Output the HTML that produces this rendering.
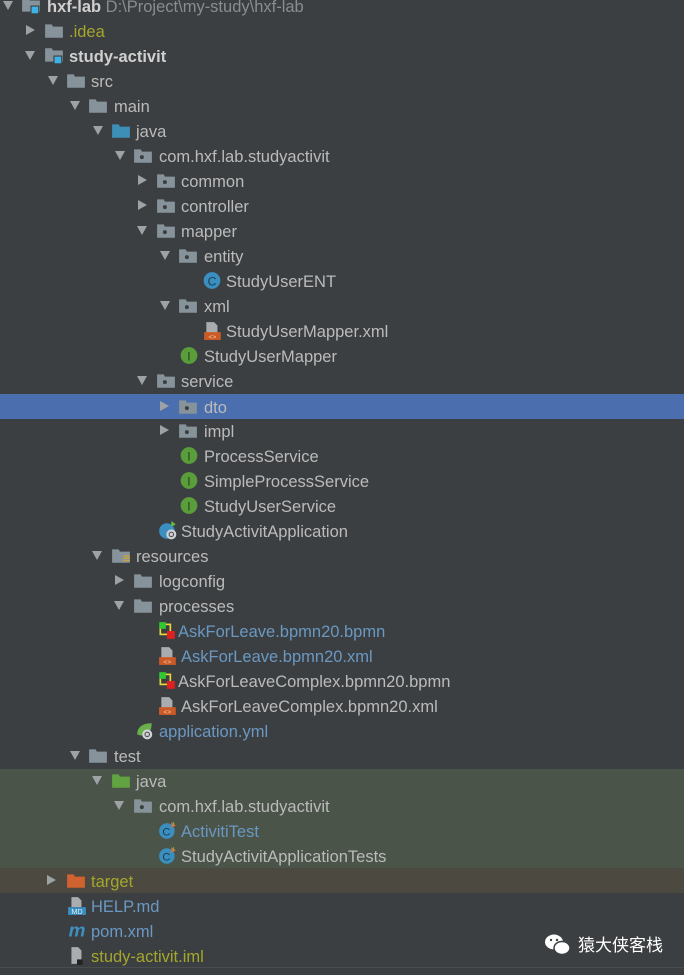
<!DOCTYPE html>
<html><head><meta charset="utf-8"><style>
body{margin:0;width:684px;height:975px;background:#3c3f41;overflow:hidden;position:relative;font-family:"Liberation Sans","Noto Sans CJK SC",sans-serif;font-size:16.5px;color:#bbbbbb}
.r{position:absolute;left:0;width:684px;height:25px}
.r>*{position:absolute}
.a{top:8px;width:0;height:0}
.o{border-left:5px solid transparent;border-right:5px solid transparent;border-top:9px solid #9fa2a5}
.c{top:7px;border-top:5px solid transparent;border-bottom:5px solid transparent;border-left:9px solid #9fa2a5}
.t{top:5px;line-height:18px;white-space:nowrap}
svg.i{top:3px;width:20px;height:19px;margin-left:-1px}
.b{color:#6a98c3}.ol{color:#a4a62c}.bold{font-weight:bold;color:#d0d0d0}
</style></head><body>
<svg width="0" height="0" style="position:absolute">
<defs>
<symbol id="fd" viewBox="0 0 18 17"><path d="M1 3h6l1 2h9v10H1z" fill="#87939a"/></symbol>
<symbol id="fb" viewBox="0 0 18 17"><path d="M1 3h6l1 2h9v10H1z" fill="#3d8fb8"/></symbol>
<symbol id="fg" viewBox="0 0 18 17"><path d="M1 3h6l1 2h9v10H1z" fill="#62a341"/></symbol>
<symbol id="fo" viewBox="0 0 18 17"><path d="M1 3h6l1 2h9v10H1z" fill="#d0622f"/></symbol>
<symbol id="fm" viewBox="0 0 18 17"><path d="M1 2h6l1 2h9v10H1z" fill="#87939a"/><rect x="9" y="9" width="7" height="7" fill="#3cb2e6" stroke="#3c3f41" stroke-width="1"/></symbol>
<symbol id="fr" viewBox="0 0 18 17"><path d="M1 3h6l1 2h9v10H1z" fill="#87939a"/><path d="M11 9h6M11 11h6M11 13h6" stroke="#c9a43a" stroke-width="1.2"/></symbol>
<symbol id="pk" viewBox="0 0 18 17"><path d="M1 3h6l1 2h9v10H1z" fill="#87939a"/><circle cx="8" cy="10" r="1.8" fill="#3c3f41"/></symbol>
<symbol id="cc" viewBox="0 0 18 17"><circle cx="9" cy="8.5" r="7.5" fill="#3a8fc0"/><text x="9" y="13" font-size="11" text-anchor="middle" fill="#1d3b4f" font-family="Liberation Sans">C</text></symbol>
<symbol id="ii" viewBox="0 0 18 17"><circle cx="9" cy="8.5" r="7.5" fill="#5a9e3c"/><text x="9" y="13" font-size="11" text-anchor="middle" fill="#23401a" font-family="Liberation Sans">I</text></symbol>
<symbol id="ct" viewBox="0 0 18 17"><circle cx="8" cy="9" r="7" fill="#3a8fc0"/><text x="7.5" y="13" font-size="10" text-anchor="middle" fill="#1d3b4f" font-family="Liberation Sans">C</text><path d="M12 1l4 3-4 2z" fill="#e06c3a"/><path d="M14 1v3" stroke="#6abf40"/></symbol>
<symbol id="cs" viewBox="0 0 18 17"><circle cx="8" cy="9" r="7" fill="#3a8fc0"/><path d="M12 0l4 3-4 2z" fill="#6abf40"/><circle cx="12" cy="12" r="4.5" fill="#cfd3d6"/><circle cx="12" cy="12" r="2" fill="none" stroke="#555" stroke-width="1"/></symbol>
<symbol id="xm" viewBox="0 0 18 17"><path d="M3 1h7l3 3v7H3z" fill="#a9adb0"/><rect x="1" y="10" width="15" height="7" fill="#cc5a26"/><text x="8.5" y="16" font-size="6" text-anchor="middle" fill="#f0d0b0" font-family="Liberation Sans">&lt;&gt;</text></symbol>
<symbol id="bp" viewBox="0 0 18 17"><rect x="3" y="3" width="9" height="9" fill="none" stroke="#e8d83a" stroke-width="1.5"/><rect x="2" y="1" width="6" height="6" fill="#32c832"/><rect x="9" y="9" width="7" height="7" fill="#e02020"/></symbol>
<symbol id="yml" viewBox="0 0 18 17"><path d="M2 12C2 4 9 2 15 2c0 7-3 11-10 11z" fill="#6ab04a"/><circle cx="11" cy="12" r="4.5" fill="#cfd3d6"/><circle cx="11" cy="12" r="2" fill="none" stroke="#555"/></symbol>
<symbol id="md" viewBox="0 0 18 17"><path d="M4 1h6l3 3v6H4z" fill="#a9adb0"/><rect x="1" y="10" width="16" height="7" fill="#3a8fc0"/><text x="9" y="16" font-size="6.5" text-anchor="middle" fill="#e0ecf4" font-family="Liberation Sans">MD</text></symbol>
<symbol id="pom" viewBox="0 0 18 17"><text x="9" y="14" font-size="17" font-style="italic" font-weight="bold" text-anchor="middle" fill="#3d8fc2" font-family="Liberation Sans">m</text></symbol>
<symbol id="iml" viewBox="0 0 18 17"><path d="M4 1h6l3 3v12H4z" fill="#a9adb0"/><rect x="9" y="12" width="5" height="5" fill="#222"/></symbol>
</defs></svg>

<div class="r" style="top:-7px"><i class="a o" style="left:3px"></i><svg class="i" style="left:22px"><use href="#fm" width="20" height="19"/></svg><span class="t bold" style="left:47px">hxf-lab <span style="font-weight:normal;color:#8a8d90">D:\Project\my-study\hxf-lab</span></span></div>
<div class="r" style="top:18px"><i class="a c" style="left:26px"></i><svg class="i" style="left:45px"><use href="#fd" width="20" height="19"/></svg><span class="t ol" style="left:69px">.idea</span></div>
<div class="r" style="top:43px"><i class="a o" style="left:25px"></i><svg class="i" style="left:45px"><use href="#fm" width="20" height="19"/></svg><span class="t bold" style="left:69px">study-activit</span></div>
<div class="r" style="top:68px"><i class="a o" style="left:48px"></i><svg class="i" style="left:67px"><use href="#fd" width="20" height="19"/></svg><span class="t" style="left:91px">src</span></div>
<div class="r" style="top:93px"><i class="a o" style="left:70px"></i><svg class="i" style="left:89px"><use href="#fd" width="20" height="19"/></svg><span class="t" style="left:114px">main</span></div>
<div class="r" style="top:118px"><i class="a o" style="left:93px"></i><svg class="i" style="left:112px"><use href="#fb" width="20" height="19"/></svg><span class="t" style="left:136px">java</span></div>
<div class="r" style="top:143px"><i class="a o" style="left:115px"></i><svg class="i" style="left:134px"><use href="#pk" width="20" height="19"/></svg><span class="t" style="left:159px">com.hxf.lab.studyactivit</span></div>
<div class="r" style="top:168px"><i class="a c" style="left:138px"></i><svg class="i" style="left:157px"><use href="#pk" width="20" height="19"/></svg><span class="t" style="left:181px">common</span></div>
<div class="r" style="top:193px"><i class="a c" style="left:138px"></i><svg class="i" style="left:157px"><use href="#pk" width="20" height="19"/></svg><span class="t" style="left:181px">controller</span></div>
<div class="r" style="top:218px"><i class="a o" style="left:137px"></i><svg class="i" style="left:157px"><use href="#pk" width="20" height="19"/></svg><span class="t" style="left:181px">mapper</span></div>
<div class="r" style="top:243px"><i class="a o" style="left:160px"></i><svg class="i" style="left:179px"><use href="#pk" width="20" height="19"/></svg><span class="t" style="left:204px">entity</span></div>
<div class="r" style="top:268px"><svg class="i" style="left:203px"><use href="#cc" width="20" height="19"/></svg><span class="t" style="left:226px">StudyUserENT</span></div>
<div class="r" style="top:293px"><i class="a o" style="left:160px"></i><svg class="i" style="left:179px"><use href="#pk" width="20" height="19"/></svg><span class="t" style="left:204px">xml</span></div>
<div class="r" style="top:318px"><svg class="i" style="left:204px"><use href="#xm" width="20" height="19"/></svg><span class="t" style="left:226px">StudyUserMapper.xml</span></div>
<div class="r" style="top:343px"><svg class="i" style="left:180px"><use href="#ii" width="20" height="19"/></svg><span class="t" style="left:204px">StudyUserMapper</span></div>
<div class="r" style="top:368px"><i class="a o" style="left:137px"></i><svg class="i" style="left:157px"><use href="#pk" width="20" height="19"/></svg><span class="t" style="left:181px">service</span></div>
<div class="r" style="top:394px;background:#4b6eaf"><i class="a c" style="left:160px"></i><svg class="i" style="left:179px"><use href="#pk" width="20" height="19"/></svg><span class="t" style="left:204px">dto</span></div>
<div class="r" style="top:418px"><i class="a c" style="left:160px"></i><svg class="i" style="left:179px"><use href="#pk" width="20" height="19"/></svg><span class="t" style="left:204px">impl</span></div>
<div class="r" style="top:443px"><svg class="i" style="left:180px"><use href="#ii" width="20" height="19"/></svg><span class="t" style="left:204px">ProcessService</span></div>
<div class="r" style="top:468px"><svg class="i" style="left:180px"><use href="#ii" width="20" height="19"/></svg><span class="t" style="left:204px">SimpleProcessService</span></div>
<div class="r" style="top:493px"><svg class="i" style="left:180px"><use href="#ii" width="20" height="19"/></svg><span class="t" style="left:204px">StudyUserService</span></div>
<div class="r" style="top:518px"><svg class="i" style="left:159px"><use href="#cs" width="20" height="19"/></svg><span class="t" style="left:181px">StudyActivitApplication</span></div>
<div class="r" style="top:543px"><i class="a o" style="left:92px"></i><svg class="i" style="left:112px"><use href="#fr" width="20" height="19"/></svg><span class="t" style="left:136px">resources</span></div>
<div class="r" style="top:568px"><i class="a c" style="left:115px"></i><svg class="i" style="left:134px"><use href="#fd" width="20" height="19"/></svg><span class="t" style="left:159px">logconfig</span></div>
<div class="r" style="top:593px"><i class="a o" style="left:114px"></i><svg class="i" style="left:134px"><use href="#fd" width="20" height="19"/></svg><span class="t" style="left:159px">processes</span></div>
<div class="r" style="top:618px"><svg class="i" style="left:158px"><use href="#bp" width="20" height="19"/></svg><span class="t b" style="left:178px">AskForLeave.bpmn20.bpmn</span></div>
<div class="r" style="top:643px"><svg class="i" style="left:159px"><use href="#xm" width="20" height="19"/></svg><span class="t b" style="left:181px">AskForLeave.bpmn20.xml</span></div>
<div class="r" style="top:668px"><svg class="i" style="left:158px"><use href="#bp" width="20" height="19"/></svg><span class="t" style="left:178px">AskForLeaveComplex.bpmn20.bpmn</span></div>
<div class="r" style="top:693px"><svg class="i" style="left:159px"><use href="#xm" width="20" height="19"/></svg><span class="t" style="left:181px">AskForLeaveComplex.bpmn20.xml</span></div>
<div class="r" style="top:718px"><svg class="i" style="left:136px"><use href="#yml" width="20" height="19"/></svg><span class="t b" style="left:159px">application.yml</span></div>
<div class="r" style="top:743px"><i class="a o" style="left:70px"></i><svg class="i" style="left:89px"><use href="#fd" width="20" height="19"/></svg><span class="t" style="left:114px">test</span></div>
<div style="position:absolute;left:0;top:769px;width:684px;height:99px;background:#4a5448"></div>
<div style="position:absolute;left:0;top:868px;width:684px;height:25px;background:#4c4a40"></div>
<div class="r" style="top:768px"><i class="a o" style="left:92px"></i><svg class="i" style="left:112px"><use href="#fg" width="20" height="19"/></svg><span class="t" style="left:136px">java</span></div>
<div class="r" style="top:793px"><i class="a o" style="left:114px"></i><svg class="i" style="left:134px"><use href="#pk" width="20" height="19"/></svg><span class="t" style="left:159px">com.hxf.lab.studyactivit</span></div>
<div class="r" style="top:818px"><svg class="i" style="left:159px"><use href="#ct" width="20" height="19"/></svg><span class="t b" style="left:181px">ActivitiTest</span></div>
<div class="r" style="top:843px"><svg class="i" style="left:159px"><use href="#ct" width="20" height="19"/></svg><span class="t" style="left:181px">StudyActivitApplicationTests</span></div>
<div class="r" style="top:868px"><i class="a c" style="left:47px"></i><svg class="i" style="left:67px"><use href="#fo" width="20" height="19"/></svg><span class="t ol" style="left:91px">target</span></div>
<div class="r" style="top:893px"><svg class="i" style="left:68px"><use href="#md" width="20" height="19"/></svg><span class="t b" style="left:91px">HELP.md</span></div>
<div class="r" style="top:918px"><svg class="i" style="left:68px"><use href="#pom" width="20" height="19"/></svg><span class="t b" style="left:91px">pom.xml</span></div>
<div class="r" style="top:943px"><svg class="i" style="left:68px"><use href="#iml" width="20" height="19"/></svg><span class="t ol" style="left:91px">study-activit.iml</span></div>
<div style="position:absolute;left:0;top:967px;width:684px;height:1px;background:#4a4d50"></div>
<svg style="position:absolute;left:544px;top:933px" width="28" height="24" viewBox="0 0 28 24"><ellipse cx="10" cy="9" rx="9" ry="7.5" fill="#fff"/><ellipse cx="18" cy="15" rx="8" ry="6.5" fill="#fff" stroke="#3c3f41" stroke-width="1.5"/><circle cx="7" cy="7" r="1.2" fill="#3c3f41"/><circle cx="13" cy="7" r="1.2" fill="#3c3f41"/></svg>
<span style="position:absolute;left:578px;top:934px;font-size:17px;color:#fff;font-family:'Noto Sans CJK SC',sans-serif;line-height:20px">猿大侠客栈</span>
</body></html>
